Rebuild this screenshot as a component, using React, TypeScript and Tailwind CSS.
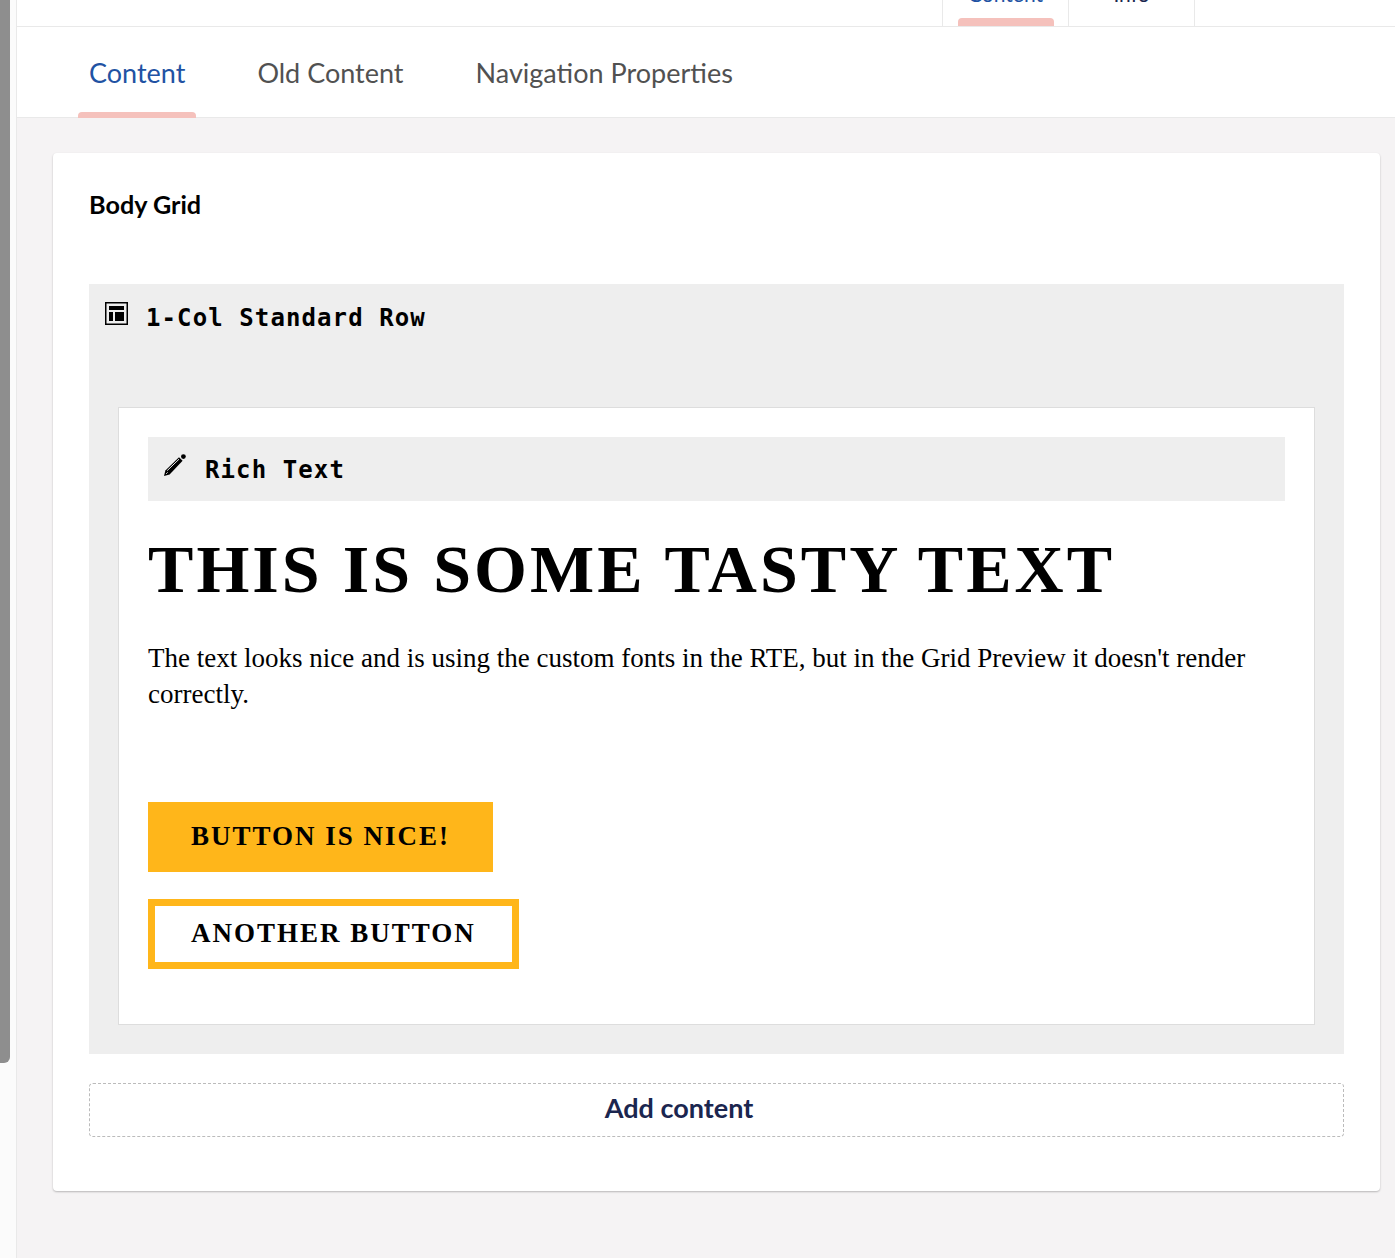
const lato = "font-['Lato','Noto_Sans',sans-serif]";
const serif = "font-['Liberation_Serif','Times_New_Roman',serif]";
const mono = "font-['DejaVu_Sans_Mono','Liberation_Mono',monospace]";

const LayoutIcon = () => (
  <svg width="23" height="23" viewBox="0 0 23 23" className="shrink-0">
    <rect x="0.75" y="0.75" width="21.5" height="21.5" fill="none" stroke="#000" strokeWidth="1.5" />
    <rect x="4" y="4" width="15" height="4" fill="#000" />
    <rect x="4" y="10" width="4" height="9" fill="#000" />
    <rect x="10" y="10" width="9" height="9" fill="#000" />
  </svg>
);

const PencilIcon = () => (
  <svg width="22" height="22" viewBox="0 0 22 22" className="shrink-0">
    <path d="M0 22l1.4-5.6L15 3.2l3.6 3.6L5.6 20.6z" fill="#000" />
    <path d="M3.2 16.6L15 5.2" stroke="#eee" strokeWidth="1" />
    <path d="M2.2 19.8l1.4-1.4" stroke="#eee" strokeWidth="1" />
    <circle cx="19.4" cy="2.6" r="2.4" fill="#000" />
  </svg>
);

const TopTab = ({ label, active }: { label: string; active?: boolean }) => (
  <div className="flex h-[26px] w-[126px] flex-col items-center justify-end border-l border-[#e9e9e9]">
    <span className={`mb-2 text-[21px] leading-[32px] whitespace-nowrap ${active ? 'text-[#2152a3]' : 'text-[#1b264f]'}`}>{label}</span>
    {active ? <div className="h-2 w-[96px] shrink-0 rounded-t-[4px] bg-[#f5c1bc]" /> : <div className="h-2 shrink-0" />}
  </div>
);

const ContentTab = ({ label, active }: { label: string; active?: boolean }) => (
  <div className="flex h-[91px] flex-col items-center justify-end">
    <span className={`px-[11px] pb-[21px] text-[27px] leading-[36px] whitespace-nowrap ${active ? 'text-[#2152a3]' : 'text-[#515151]'}`}>{label}</span>
    <div className={`h-[6px] w-full rounded-t-[4px] ${active ? 'bg-[#f5c1bc]' : ''}`} />
  </div>
);

export default function App() {
  return (
    <div className={`flex h-[1258px] w-[1395px] overflow-hidden bg-[#f5f3f4] ${lato}`}>
      <div className="h-full w-[17px] shrink-0 border-r border-[#e9e9e9] bg-[#fbfbfb]">
        <div className="h-[1063px] w-[10px] rounded-br-[6px] bg-[#8e8e8e]" />
      </div>

      <div className="flex min-w-0 flex-1 flex-col">
        <div className="flex h-[27px] shrink-0 overflow-hidden border-b border-[#e9e9e9] bg-white pl-[925px]">
          <TopTab label="Content" active />
          <TopTab label="Info" />
          <div className="h-[26px] border-l border-[#e9e9e9]" />
        </div>

        <div className="flex h-[91px] shrink-0 gap-[50px] border-b border-[#e9e9e9] bg-white pl-[61px]">
          <ContentTab label="Content" active />
          <ContentTab label="Old Content" />
          <ContentTab label="Navigation Properties" />
        </div>

        <div className="ml-9 mt-[35px] h-[1038px] w-[1327px] rounded-[4px] bg-white px-9 pt-[33px] shadow-[0_1px_2px_rgba(0,0,0,0.25)]">
          <h2 className="text-[25.2px] leading-9 font-bold text-black">Body Grid</h2>

          <div className="mt-[62px] bg-[#eeeeee] px-[29px] pb-[29px]">
            <div className="-ml-[13px] flex h-[123px] items-start gap-[18px] pt-[18px]">
              <LayoutIcon />
              <span className={`mt-[2px] text-[24px] leading-[28px] font-bold tracking-[1.1px] text-black ${mono}`}>1-Col Standard Row</span>
            </div>

            <div className="h-[618px] border border-[#dddddd] bg-white px-[29px] pt-[29px]">
              <div className="flex h-16 items-center gap-[19px] bg-[#eeeeee] pl-4">
                <div className="-mt-[8px]"><PencilIcon /></div>
                <span className={`mt-[2px] text-[24px] leading-[28px] font-bold tracking-[1.1px] text-black ${mono}`}>Rich Text</span>
              </div>

              <div className={`text-black ${serif}`}>
                <h1 className="mt-[29px] text-[68px] leading-[78px] font-bold tracking-[3.05px] whitespace-nowrap">THIS IS SOME TASTY TEXT</h1>
                <p className="mt-[32px] text-[27px] leading-9">
                  The text looks nice and is using the custom fonts in the RTE, but in the Grid Preview it doesn't render correctly.
                </p>
                <div className="mt-[90px] flex w-fit flex-col gap-[27px]">
                  <a className="flex h-[70px] w-[345px] items-center bg-[#ffb61a] pb-[2px] pl-[43px] text-[27px] font-bold tracking-[2px] whitespace-nowrap">BUTTON IS NICE!</a>
                  <a className="flex h-[70px] w-[371px] items-center border-[7px] border-[#ffb61a] pb-[2px] pl-9 text-[27px] font-bold tracking-[2px] whitespace-nowrap">ANOTHER BUTTON</a>
                </div>
              </div>
            </div>
          </div>

          <button className="mt-[29px] h-[54px] w-full rounded-[4px] border border-dashed border-[#bbbbbb] pr-[75px] pb-1 text-center text-[27px] leading-[42px] font-bold text-[#1b264f]">
            Add content
          </button>
        </div>
      </div>
    </div>
  );
}
